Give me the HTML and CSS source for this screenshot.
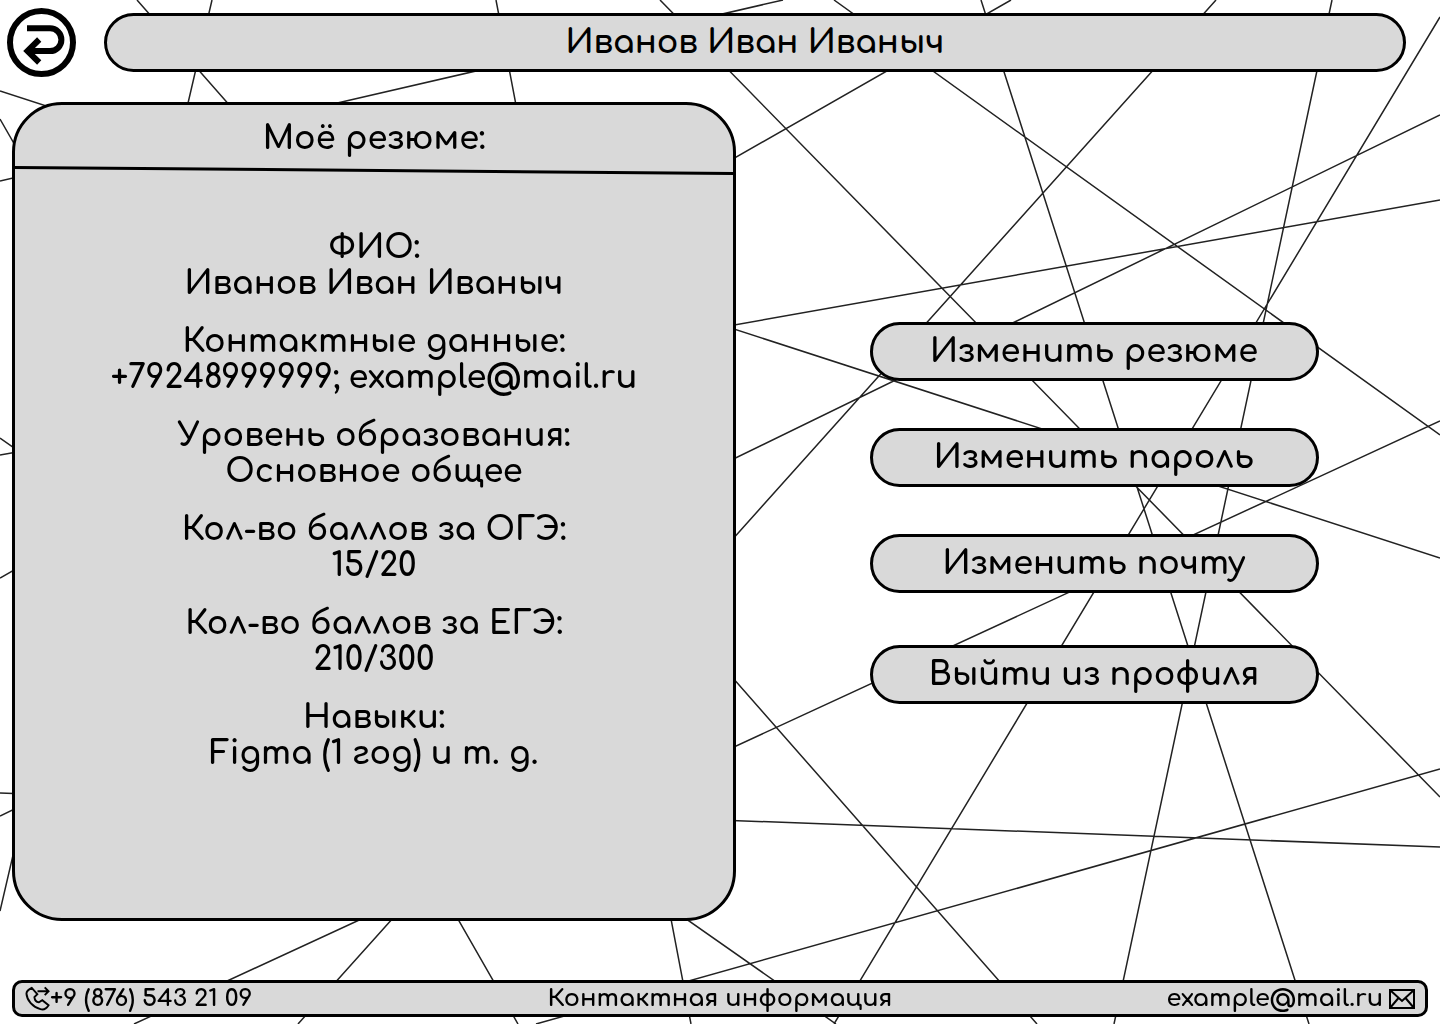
FILE: index.html
```html
<!DOCTYPE html>
<html lang="ru">
<head>
  <meta charset="utf-8">
  <meta name="viewport" content="width=device-width, initial-scale=1">
  <title>Иванов Иван Иваныч</title>
  <link rel="stylesheet" href="styles.css">
</head>
<body>
  <svg class="backdrop" viewBox="0 0 1440 1024" preserveAspectRatio="none" aria-hidden="true">
    <path d="M137 0 1037 1024M212 0 0 911M496 0 691 1024M660 0 1440 797M834 0 1440 435M981 0 1309 1024M1011 0 0 578M1216 0 298 1024M1332 0 1114 1024M1440 17 834 1024M1440 115 0 816M1440 200 0 455M0 91 1440 558M1440 421 134 1024M0 793 1440 847M1440 769 536 1024M783 0 0 181M0 119 518 1024M0 438 836 1024"/>
  </svg>

  <header class="header">
    <a class="back" href="#" aria-label="Назад">
      <svg class="back-icon" viewBox="0 0 69 69" aria-hidden="true">
        <circle cx="34.500" cy="34.500" r="31.500"/>
        <path d="M20 20.300H43A11.400 11.400 0 0 1 43 43.100H20.500"/>
        <path d="M32.200 31.500 20.500 43.100 32.200 54.500"/>
      </svg>
    </a>
    <h1 class="title">Иванов Иван Иваныч</h1>
  </header>

  <main class="main">
    <section class="card">
      <h2 class="card-title">Моё резюме:</h2>
      <svg class="divider" viewBox="0 0 718 10" preserveAspectRatio="none" aria-hidden="true">
        <path d="M0 2.500 718 8.500"/>
      </svg>
      <dl class="resume">
        <div><dt>ФИО:</dt><dd>Иванов Иван Иваныч</dd></div>
        <div><dt>Контактные данные:</dt><dd>+79248999999; example@mail.ru</dd></div>
        <div><dt>Уровень образования:</dt><dd>Основное общее</dd></div>
        <div><dt>Кол-во баллов за ОГЭ:</dt><dd>15/20</dd></div>
        <div><dt>Кол-во баллов за ЕГЭ:</dt><dd>210/300</dd></div>
        <div><dt>Навыки:</dt><dd>Figma (1 год) и т. д.</dd></div>
      </dl>
    </section>

    <div class="actions">
      <div class="edit-actions">
        <button class="action" type="button">Изменить резюме</button>
        <button class="action" type="button">Изменить пароль</button>
        <button class="action" type="button">Изменить почту</button>
      </div>
      <button class="action" type="button">Выйти из профиля</button>
    </div>
  </main>

  <footer class="footer">
    <a class="contact" href="tel:+98765432109">
      <svg class="phone-icon" viewBox="0 0 26 26" aria-hidden="true">
        <path d="M7 2 12.800 8.500 9.800 11.500C10 14 12 16.500 14.500 17L18 14.800 24.500 20C22 24 19 25 16 24C8 22 2 15 1.500 8C1.500 5 4 3.500 7 2ZM13 5.500H24.500M20.500 1.500 24.500 5.500 20.500 9.500"/>
      </svg>
      <span>+9 (876) 543 21 09</span>
    </a>
    <p class="caption">Контактная информация</p>
    <a class="contact contact-mail" href="mailto:example@mail.ru">
      <span>example@mail.ru</span>
      <svg class="mail-icon" viewBox="0 0 26 20" aria-hidden="true">
        <path d="M1 1H25V19H1ZM1 1 13 12 25 1M1 19 9.500 9M25 19 16.500 9"/>
      </svg>
    </a>
  </footer>
</body>
</html>
```
FILE: styles.css
```css
* {
  box-sizing: border-box;
}

body {
  display: flex;
  flex-direction: column;
  min-height: 100vh;
  margin: 0;
  background: #fff;
  color: #000;
  font-family: "Comfortaa", "DejaVu Sans", sans-serif;
  font-size: 32px;
  font-weight: 700;
  line-height: 36px;
}

h1,
h2,
p,
dl,
dd {
  margin: 0;
  font-size: inherit;
  font-weight: inherit;
}

a {
  color: inherit;
  text-decoration: none;
}

svg {
  display: block;
  fill: none;
  stroke: #000;
}

.backdrop {
  position: fixed;
  inset: 0;
  z-index: -1;
  width: 100%;
  height: 100%;
  stroke: #222;
  stroke-width: 1.5;
}

.header {
  display: flex;
  align-items: center;
  gap: 28px;
  padding: 8px 34px 25px 7px;
}

.back-icon {
  width: 69px;
  height: 69px;
  stroke-width: 6;
}

.title {
  flex: 1;
  padding: 9px 24px 8px;
  border: 3px solid #000;
  border-radius: 30px;
  background: #d9d9d9;
  text-align: center;
}

.main {
  display: grid;
  flex: 1;
  grid-template-columns: 724fr 692fr;
  gap: 12px;
  padding: 0 0 59px 12px;
}

.card {
  overflow: hidden;
  border: 3px solid #000;
  border-radius: 50px;
  background: #d9d9d9;
  text-align: center;
}

.card-title {
  padding: 16px 24px 8px;
}

.divider {
  width: 100%;
  height: 10px;
  stroke-width: 3;
}

.resume {
  display: grid;
  gap: 22px;
  padding: 55px 24px;
}

.actions {
  display: grid;
  align-content: center;
  justify-content: center;
  grid-template-columns: minmax(0, 449px);
  gap: 52px;
  padding-top: 3px;
}

.edit-actions {
  display: grid;
  gap: 47px;
}

.action {
  padding: 9px 24px 8px;
  border: 3px solid #000;
  border-radius: 30px;
  background: #d9d9d9;
  color: inherit;
  font: inherit;
  cursor: pointer;
}

.footer {
  display: grid;
  grid-template-columns: 1fr auto 1fr;
  align-items: center;
  margin: 0 12px 7px;
  padding: 0 10px;
  border: 3px solid #000;
  border-radius: 10px;
  background: #d9d9d9;
  font-size: 24px;
  line-height: 31px;
}

.contact {
  display: flex;
  align-items: center;
}

.contact-mail {
  justify-content: flex-end;
  gap: 6px;
}

.phone-icon {
  width: 25px;
  height: 25px;
  stroke-width: 2;
}

.mail-icon {
  width: 26px;
  height: 20px;
  stroke-width: 2;
}
```
